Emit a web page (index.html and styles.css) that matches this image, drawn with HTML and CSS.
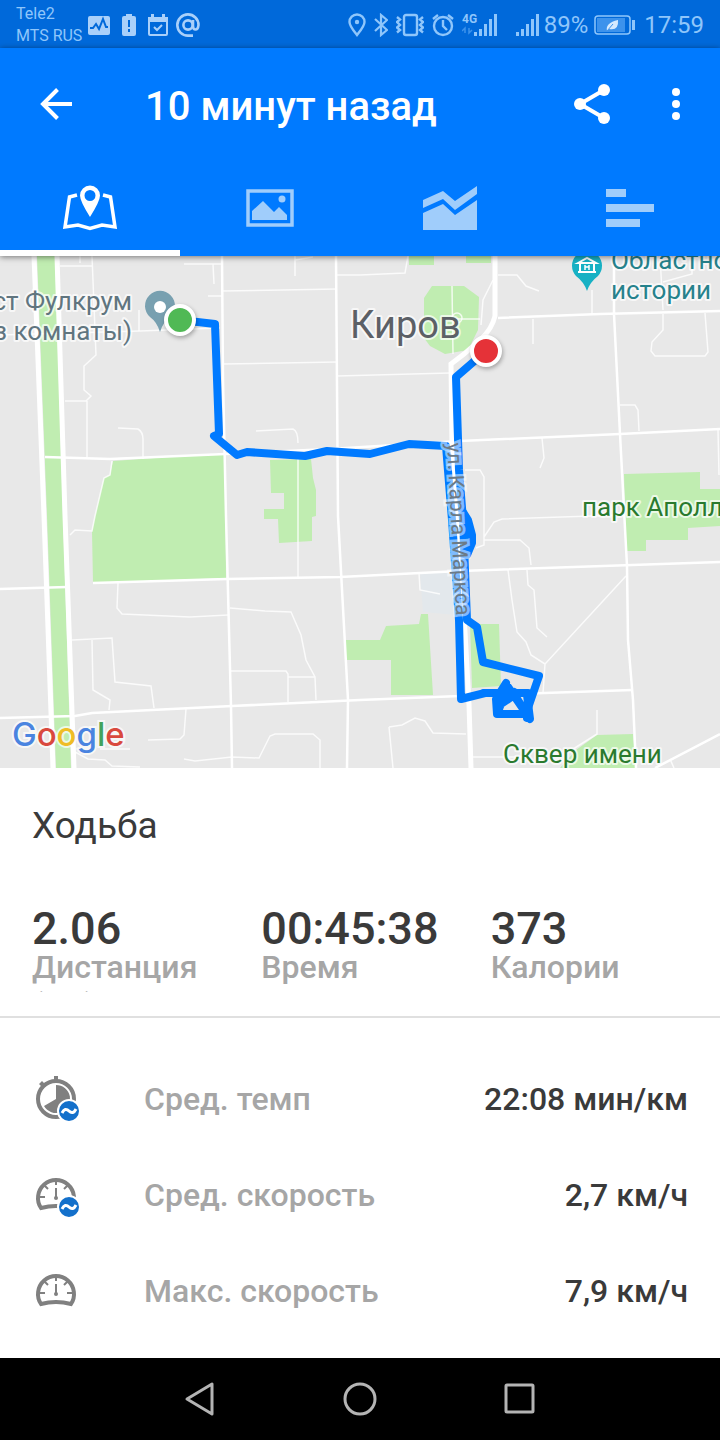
FILE: index.html
```
<!DOCTYPE html>
<html lang="ru">
<head>
    <meta charset="UTF-8">
    <meta name="viewport" content="width=device-width, initial-scale=1.0">
    <title>Ходьба</title>
    <link rel="stylesheet" href="styles.css">
</head>
<body>

    <div class="status-bar">
        <div class="carriers">
            <span>Tele2</span>
            <span>MTS RUS</span>
        </div>
        <div class="notifications">
            <svg width="22" height="20" viewBox="0 0 22 20">
                <rect width="22" height="19" y="1" rx="2" fill="currentColor"/>
                <path d="M2 13h3l3-4 3 5 4-10 3 8h2" fill="none" stroke="#0069da" stroke-width="2"/>
            </svg>
            <svg width="14" height="22" viewBox="0 0 14 22">
                <path d="M4 0h6v2h2q2 0 2 2v16q0 2-2 2H2q-2 0-2-2V4q0-2 2-2h2z" fill="currentColor"/>
                <path d="M7 6v7M7 15v3" stroke="#0069da" stroke-width="2"/>
            </svg>
            <svg width="20" height="22" viewBox="0 0 20 22">
                <path d="M1 4h18v16q0 1-1 1H2q-1 0-1-1z" fill="none" stroke="currentColor" stroke-width="2"/>
                <path d="M0 3h20v5H0zM3 0h3v4H3zM14 0h3v4h-3z" fill="currentColor"/>
                <path d="M6 13l3 3 5-5" fill="none" stroke="currentColor" stroke-width="2"/>
            </svg>
            <svg class="mail" width="24" height="24" viewBox="0 0 24 24" fill="none" stroke="currentColor" stroke-width="2.6">
                <circle cx="12" cy="12" r="4.6"/>
                <path d="M17 7v6q0 3.500 2.500 3.500t3-4.500A10.600 10.600 0 1 0 12 22.600h5"/>
            </svg>
        </div>
        <div class="system">
            <svg width="18" height="24" viewBox="0 0 18 24">
                <path d="M9 22C5 17 1.500 13 1.500 9a7.500 7.500 0 0 1 15 0C16.500 13 13 17 9 22z" fill="none" stroke="currentColor" stroke-width="2.4"/>
                <circle cx="9" cy="9" r="2.200" fill="currentColor"/>
            </svg>
            <svg width="14" height="24" viewBox="0 0 14 24">
                <path d="M1 6l12 11-6 5V2l6 5L1 18" fill="none" stroke="currentColor" stroke-width="2.2"/>
            </svg>
            <svg width="28" height="24" viewBox="0 0 28 24" fill="none" stroke="currentColor" stroke-width="2.4">
                <rect x="8" y="2" width="13" height="20" rx="2"/>
                <path d="M1 4l3 2.500-3 2.500 3 3-3 2.500 3 2.500-3 2.500M27 4l-3 2.500 3 2.500-3 3 3 2.500-3 2.500 3 2.500"/>
            </svg>
            <svg width="22" height="24" viewBox="0 0 22 24" fill="none" stroke="currentColor" stroke-width="2.4">
                <circle cx="11" cy="13" r="9"/>
                <path d="M11 7v6l4 4M1 6l5-4M21 6l-5-4"/>
            </svg>
            <svg width="36" height="24" viewBox="0 0 36 24">
                <text class="net" x="0" y="10">4G</text>
                <path d="M3 20v-5l-3 3M7 15v5l3-3" fill="none" stroke="#3c92ec" stroke-width="1.500"/>
                <path d="M12 19h3v4h-3zM17 16h3v7h-3zM22 11h3v12h-3zM27 6h3v17h-3zM32 1h3v22h-3z" fill="currentColor"/>
            </svg>
            <svg class="sim2" width="24" height="24" viewBox="0 0 24 24">
                <path d="M0 19h3v4H0zM5 16h3v7H5zM10 11h3v12h-3zM15 6h3v17h-3zM20 1h3v22h-3z" fill="currentColor"/>
            </svg>
            <span class="percent">89%</span>
            <svg width="42" height="24" viewBox="0 0 42 24">
                <rect x="1" y="3" width="35" height="18" rx="3" fill="none" stroke="currentColor" stroke-width="1.500"/>
                <rect x="3" y="5" width="28" height="14" fill="#3c92ec"/>
                <path d="M38 7h3v10h-3z" fill="currentColor"/>
                <path d="M13 18q-2-8 11-11 1 11-9 9z" fill="#d6eaff"/>
                <path d="M13 18l6-7" stroke="#3c92ec"/>
            </svg>
            <span>17:59</span>
        </div>
    </div>

    <header class="header">
        <div class="title-bar">
            <button class="icon-button back" aria-label="Назад">
                <svg width="32" height="32" viewBox="0 0 32 32" fill="none" stroke="currentColor" stroke-width="4">
                    <path d="M32 16H3M17.500 1.500L3 16l14.500 14.500"/>
                </svg>
            </button>
            <h1>10 минут назад</h1>
            <button class="icon-button" aria-label="Поделиться">
                <svg width="36" height="40" viewBox="0 0 36 40">
                    <path d="M30 6L6 20l24 14" fill="none" stroke="currentColor" stroke-width="4"/>
                    <circle cx="30" cy="6" r="6" fill="currentColor"/>
                    <circle cx="6" cy="20" r="6" fill="currentColor"/>
                    <circle cx="30" cy="34" r="6" fill="currentColor"/>
                </svg>
            </button>
            <button class="icon-button more" aria-label="Ещё">
                <svg width="8" height="32" viewBox="0 0 8 32" fill="currentColor">
                    <circle cx="4" cy="4" r="4"/>
                    <circle cx="4" cy="16" r="4"/>
                    <circle cx="4" cy="28" r="4"/>
                </svg>
            </button>
        </div>
        <nav class="tabs">
            <button class="tab active" aria-label="Карта">
                <svg width="54" height="46" viewBox="0 0 54 46">
                    <path d="M14 10L6.500 12 2 42l13-2 12 3.500L39 40l13 2-4.500-30-7.500-2" fill="none" stroke="currentColor" stroke-width="3.500"/>
                    <path d="M27 32Q17 16 17 10.500a10 10 0 0 1 20 0Q37 16 27 32zM27 5a5.500 5.500 0 1 0 0 11 5.500 5.500 0 0 0 0-11z" fill="currentColor" fill-rule="evenodd"/>
                </svg>
            </button>
            <button class="tab" aria-label="Фото">
                <svg width="48" height="46" viewBox="0 0 48 46">
                    <rect x="2" y="6" width="44" height="34" fill="none" stroke="currentColor" stroke-width="3.500"/>
                    <circle cx="36" cy="14" r="3.500" fill="currentColor"/>
                    <path d="M6 35v-9l11-10 11 11 5-5 8 8v5z" fill="currentColor"/>
                </svg>
            </button>
            <button class="tab" aria-label="График">
                <svg width="54" height="46" viewBox="0 0 54 46" fill="currentColor">
                    <path d="M0 15l20-9 12 10L54 1v8L32 25 20 14 0 23z"/>
                    <path d="M0 28l20-9 12 11 22-15v30H0z"/>
                </svg>
            </button>
            <button class="tab" aria-label="Отрезки">
                <svg width="48" height="46" viewBox="0 0 48 46" fill="currentColor">
                    <path d="M0 4h20v8H0zM0 19h48v8H0zM0 34h34v8H0z"/>
                </svg>
            </button>
        </nav>
    </header>

    <main>
        <div class="map">
            <svg viewBox="0 256 720 512">
                <!-- parks -->
                <g class="park">
                    <path d="M37 256h18l8 260 8 252H56l-9-252z"/>
                    <path d="M113 461l112-8 1 125-133 5-1-51 3-16 9-38 6-3z"/>
                    <path d="M270 460l41-1 2 19 3 12v26l-4 1v24l-33 2-1-24h-14v-10h20v-16h-13z"/>
                    <path d="M409 256h25v9h-25zM466 256h25v7h-25z"/>
                    <path d="M424 298l8-12h32l15 11-1 33-10 20-23 4-15-8-6-8z"/>
                    <path d="M346 640h34l6-14 33-2 2-10h7l5 81h-42v-35h-45z"/>
                    <path d="M470 624h29l2 62-29 2z"/>
                    <path d="M624 474l76-2v17h20v37l-32 2v12h-42v11h-20z"/>
                    <path d="M560 768l16-18 21-15 36-1 3 34z"/>
                </g>
                <path d="M420 573h30l6 42-33-3z" fill="#e3e8ec"/>

                <!-- small streets -->
                <g class="street">
                    <path d="M60 266h32M80 256v7M92 256l4 99-12 11v24l7 6-5 5H65M87 401v56"/>
                    <path d="M118 428l20 1q5 3 5 10v20M139 310v22M0 335l140-4 80-3"/>
                    <path d="M112 461l-2 14-6 3-9 38-3 15-17-1-5 5"/>
                    <path d="M184 264h38M213 264l1 20M208 296h14M222 291l115-2M223 364l114-2M295 256v20M295 260l18-3"/>
                    <path d="M335 275h25l45-2 3-17M337 376l113-3M256 431l37-2q5 2 5 14M298 455v122"/>
                    <path d="M118 583l-1 25 5 6 68 3 38-2M72 640l40-2 3 44 36 4 3 22M92 640l1 50 17 10-1 10"/>
                    <path d="M230 608l35 3 26 1 10 23 5 25 9 17 1 23M231 671h55l2 3v28M288 677h27"/>
                    <path d="M186 709l-2 26-4 4-32 1M184 759l11 2 37-4 27 1 11-22 5-2h38l7 6v28M75 752l13 7 17 1 7 6 28 1M100 749h30"/>
                    <path d="M452 286l1 68M454 319h26M493 280l-10 20-2 25"/>
                    <circle cx="457" cy="318" r="5"/>
                    <path d="M498 275h19l9 11 13 5M592 290v24M533 319v25M663 314v16l-11 12-1 9 4 5h50l3-4-3-39M620 405h15l3 5 1 21M542 438l2 20-4 10M718 430l1 45M660 256l3 54M663 282l29-8v-18"/>
                    <path d="M465 470h15l4 7v68l-8 3M484 537l10-15 8-3 121-4M484 540h36l9 8 2 17M419 573l1 17 20 4"/>
                    <path d="M508 570l4 30 5 32 9 10 5 13 14 9M527 570l1 15 6 5 3 38 10 9M626 576l-81 88-2 29"/>
                    <path d="M389 727l13-2 13-7 10 3 8 12 33 1M389 727l4 41M471 757h59M597 710v24l-27 17M670 759l4 9"/>
                </g>

                <!-- roads -->
                <g class="road">
                    <path d="M45 457l65 2 115-5 105-5 130-8 160-7 100-5"/>
                    <path d="M0 589l67-2M93 583l134-4 113-2 120-6 260-9"/>
                    <path d="M0 718l75-2 17-3 140-7 128-6 100-4 172-6"/>
                    <path d="M222 256l1 124 3 136 5 190 1 62M336 256l2 260 10 184-1 68"/>
                    <path d="M498 318l102-4 120-3M614 256v58l6 120 7 132 1 74 5 60 3 68M655 768l65-34"/>
                </g>
                <path class="avenue" d="M34 256l10 260 9 252M57 256l8 260 9 252"/>
                <path class="avenue" d="M495 256v60q-3 13-14 23l-17 15-13 10 1 80 12 170 5 90 2 64"/>

                <!-- places -->
                <path d="M160 332q-3-10-10-15a15 15 0 1 1 20 0q-7 5-10 15z" fill="#78a0b0"/>
                <circle cx="160" cy="307" r="6" fill="#fff"/>
                <path d="M587 291q-3-9-11-15a15 15 0 1 1 22 0q-8 6-11 15z" fill="#17b1c4"/>
                <path d="M578 263l9-5 9 5zM580 264v7M594 264v7M578 272h18" fill="none" stroke="#fff" stroke-width="2"/>
                <path d="M585 265v5M589 265v5M585 267h4" stroke="#fff" stroke-width="1.500"/>
                <g class="place">
                    <text class="slate" x="132" y="310" text-anchor="end">ст Фулкрум</text>
                    <text class="slate" x="132" y="340" text-anchor="end">з комнаты)</text>
                    <text class="teal" x="611" y="269">Областно</text>
                    <text class="teal" x="611" y="299">истории</text>
                    <text class="green" x="582" y="516">парк Аполл</text>
                    <text class="green" x="503" y="763">Сквер имени</text>
                    <text class="city" x="350" y="338">Киров</text>
                </g>

                <!-- track -->
                <g class="track">
                    <path d="M180 320l35 4 4 110-5 2 23 19 10-3 58 4 22-5 43 3 39-10 37 2 6 74 7 100 2 79 24-6h43"/>
                    <path d="M486 351l-30 26 3 93 4 50 4 100 10 7 6 35 56 14-11 32-1 10"/>
                    <path d="M463 512l5 8 4 15v8l-5 12v-34l2 24"/>
                    <path d="M484 693h42M506 683l-10 16 1 15 30 0-21-30 24 35-3-24M500 698l14-6M498 706l12-8M506 690l-8 22M513 692l16 26"/>
                </g>
                <text class="street-name" transform="translate(447 443) rotate(87)">ул. Карла Маркса</text>

                <g class="marker">
                    <circle cx="180" cy="320" r="14" fill="#50b955"/>
                    <circle cx="486" cy="351" r="14" fill="#e53238"/>
                </g>

                <text class="google" x="12" y="746"><tspan fill="#4a84e0">G</tspan><tspan fill="#d9493e">o</tspan><tspan fill="#efbd25">o</tspan><tspan fill="#4a84e0">g</tspan><tspan fill="#43a35c">l</tspan><tspan fill="#d9493e">e</tspan></text>
            </svg>
        </div>

        <section class="summary">
            <h2>Ходьба</h2>
            <div class="stats">
                <div class="stat">
                    <div class="value">2.06</div>
                    <div class="label">Дистанция (км)</div>
                </div>
                <div class="stat">
                    <div class="value">00:45:38</div>
                    <div class="label">Время</div>
                </div>
                <div class="stat">
                    <div class="value">373</div>
                    <div class="label">Калории</div>
                </div>
            </div>
        </section>

        <dl class="details">
            <div class="row">
                <svg width="48" height="48" viewBox="0 0 48 48">
                    <circle cx="24" cy="24" r="18" fill="none" stroke="#808080" stroke-width="4"/>
                    <path d="M22 1h4v5h-4zM7 9l3-3 3 3-3 3z" fill="#808080"/>
                    <path d="M24 24V10a14 14 0 1 1-12 21z" fill="#808080"/>
                    <circle cx="37" cy="36" r="11" fill="#1370cb" stroke="#fff" stroke-width="2"/>
                    <path d="M30 38q3-6 7-2t7-2" fill="none" stroke="#fff" stroke-width="3"/>
                </svg>
                <dt>Сред. темп</dt>
                <dd>22:08 мин/км</dd>
            </div>
            <div class="row">
                <svg width="48" height="48" viewBox="0 0 48 48">
                    <path d="M9 37a18 18 0 1 1 30 0q-15-4-30 0z" fill="none" stroke="#808080" stroke-width="4"/>
                    <path d="M24 8v6M12 14l4 4M36 14l-4 4M7 26h6M41 26h-6" stroke="#808080" stroke-width="2"/>
                    <path d="M24 17v10" stroke="#808080" stroke-width="2"/>
                    <circle cx="24" cy="27" r="2" fill="#808080"/>
                    <circle cx="37" cy="36" r="11" fill="#1370cb" stroke="#fff" stroke-width="2"/>
                    <path d="M30 38q3-6 7-2t7-2" fill="none" stroke="#fff" stroke-width="3"/>
                </svg>
                <dt>Сред. скорость</dt>
                <dd>2,7 км/ч</dd>
            </div>
            <div class="row">
                <svg width="48" height="48" viewBox="0 0 48 48">
                    <path d="M9 37a18 18 0 1 1 30 0q-15-4-30 0z" fill="none" stroke="#808080" stroke-width="4"/>
                    <path d="M24 8v6M12 14l4 4M36 14l-4 4M7 26h6M41 26h-6" stroke="#808080" stroke-width="2"/>
                    <path d="M24 17v10" stroke="#808080" stroke-width="2"/>
                    <circle cx="24" cy="27" r="2" fill="#808080"/>
                </svg>
                <dt>Макс. скорость</dt>
                <dd>7,9 км/ч</dd>
            </div>
        </dl>
    </main>

    <footer class="nav-bar">
        <button class="icon-button" aria-label="Назад">
            <svg width="32" height="36" viewBox="0 0 32 36" fill="none" stroke="currentColor" stroke-width="3" stroke-linejoin="round">
                <path d="M28 3v30L3 18z"/>
            </svg>
        </button>
        <button class="icon-button" aria-label="Домой">
            <svg width="34" height="36" viewBox="0 0 34 36" fill="none" stroke="currentColor" stroke-width="3">
                <circle cx="17" cy="18" r="15"/>
            </svg>
        </button>
        <button class="icon-button" aria-label="Недавние">
            <svg width="32" height="36" viewBox="0 0 32 36" fill="none" stroke="currentColor" stroke-width="3">
                <rect x="2" y="4" width="27" height="27" rx="1"/>
            </svg>
        </button>
    </footer>

</body>
</html>
```
FILE: styles.css
```
* {
    box-sizing: border-box;
}

body {
    font-family: Roboto, sans-serif;
    margin: 0;
    min-height: 100vh;
    display: flex;
    flex-direction: column;
    background-color: #fff;
    color: #3a3a3a;
}

h1, h2, dl, dt, dd {
    margin: 0;
}

svg {
    display: block;
    flex-shrink: 0;
}

button {
    background: none;
    border: none;
    padding: 0;
    color: inherit;
    cursor: pointer;
}

/* status bar */
.status-bar {
    display: flex;
    align-items: center;
    height: 48px;
    padding: 2px 16px 0;
    background-color: #0069da;
    color: #8fc6fb;
}

.carriers {
    display: flex;
    flex-direction: column;
    font-size: 16px;
    line-height: 22px;
}

.notifications {
    display: flex;
    align-items: center;
    gap: 12px;
    margin-left: 6px;
    color: #a9d0fa;
}

.notifications .mail {
    margin-left: -4px;
}

.system {
    display: flex;
    align-items: center;
    gap: 8px;
    margin-left: auto;
    font-size: 24px;
}

.system .net {
    font-size: 12px;
    font-weight: bold;
    fill: currentColor;
}

.system .sim2 {
    margin-left: 10px;
}

.system .percent {
    margin: 0 -2px 0 -4px;
}

/* header */
.header {
    position: relative;
    z-index: 1;
    background-color: #007aff;
    color: #fff;
    box-shadow: 0 1px 6px rgba(0, 0, 0, 0.5);
}

.title-bar {
    display: flex;
    align-items: center;
    height: 112px;
    padding: 0 40px;
}

.title-bar h1 {
    flex: 1;
    margin-left: 73px;
    padding-top: 6px;
    font-size: 40px;
    font-weight: 500;
    line-height: 48px;
}

.title-bar .more {
    margin-left: 62px;
}

.icon-button {
    display: flex;
    align-items: center;
    justify-content: center;
}

.tabs {
    display: flex;
}

.tab {
    flex: 1;
    display: flex;
    align-items: center;
    justify-content: center;
    height: 96px;
    padding-top: 6px;
    border-bottom: 6px solid transparent;
    color: #a0cdfb;
}

.tab.active {
    color: #fff;
    border-bottom-color: #fff;
}

/* map */
.map {
    background-color: #e8e8e8;
}

.map svg {
    width: 100%;
    height: auto;
}

.park {
    fill: #c0edb1;
}

.street, .road, .avenue {
    fill: none;
    stroke: #fff;
}

.street {
    stroke-width: 1.5px;
    stroke-opacity: 0.8;
}

.road {
    stroke-width: 2.5px;
}

.avenue {
    stroke-width: 5px;
}

.place {
    font-size: 26px;
    stroke: rgba(255, 255, 255, 0.7);
    stroke-width: 4px;
    stroke-linejoin: round;
    paint-order: stroke;
}

.slate {
    fill: #60757f;
}

.teal {
    fill: #26828c;
}

.green {
    fill: #2a7a2e;
}

.city {
    font-size: 38px;
    fill: #5c6066;
}

.track {
    fill: none;
    stroke: #007aff;
    stroke-width: 8px;
    stroke-linejoin: round;
    stroke-linecap: round;
}

.street-name {
    font-size: 21px;
    fill: #6c7a86;
    stroke: rgba(255, 255, 255, 0.5);
    stroke-width: 5px;
    paint-order: stroke;
}

.marker {
    stroke: #fff;
    stroke-width: 4px;
    filter: drop-shadow(1px 2px 2px rgba(0, 0, 0, 0.3));
}

.google {
    font-family: Inter, sans-serif;
    font-size: 33px;
    font-weight: 500;
    stroke: rgba(255, 255, 255, 0.7);
    stroke-width: 4px;
    paint-order: stroke;
}

/* workout summary */
.summary {
    padding: 36px 0 24px 32px;
    border-bottom: 2px solid #e0e0e0;
}

.summary h2 {
    margin-bottom: 56px;
    font-size: 37px;
    font-weight: normal;
    line-height: 44px;
}

.stats {
    display: grid;
    grid-template-columns: repeat(3, 1fr);
}

.value {
    height: 40px;
    overflow: hidden;
    font-size: 45px;
    font-weight: 500;
    line-height: 50px;
}

.label {
    height: 44px;
    margin-top: 4px;
    overflow: hidden;
    font-size: 32px;
    font-weight: 500;
    line-height: 38px;
    color: #a6a6a6;
}

/* details */
.details {
    padding: 33px 32px 19px;
}

.row {
    display: flex;
    align-items: center;
    height: 96px;
    font-size: 32px;
    font-weight: 500;
}

.row dt {
    margin-left: 64px;
    color: #a6a6a6;
}

.row dd {
    margin-left: auto;
}

/* system buttons */
.nav-bar {
    display: flex;
    align-items: center;
    justify-content: center;
    gap: 127px;
    height: 82px;
    margin-top: auto;
    background-color: #000;
    color: #b4b4b4;
}
```
